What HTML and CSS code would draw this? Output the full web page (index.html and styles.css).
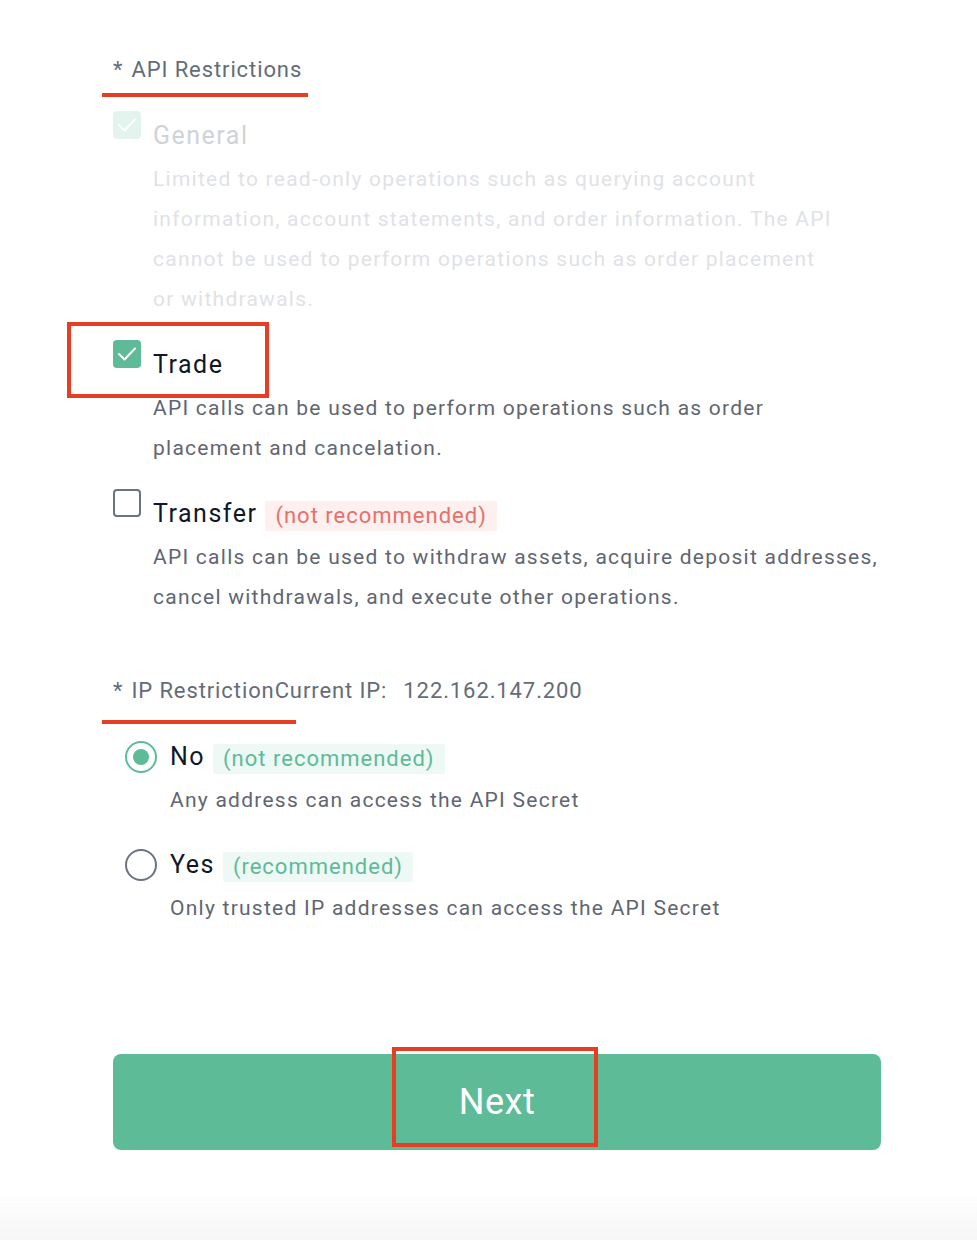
FILE: index.html
```html
<!DOCTYPE html>
<html lang="en">
<head>
<meta charset="utf-8">
<title>API Restrictions</title>
<link rel="stylesheet" href="styles.css">
</head>
<body>
<div class="page">
  <section class="group">
    <div class="group-title"><span class="star">*</span>API Restrictions</div>
    <div class="options">
      <div class="option disabled">
        <div class="option-row">
          <span class="checkbox checked"><svg viewBox="0 0 28 28" width="28" height="28"><path d="M6 14 L11.5 19.5 L22 8.5" fill="none" stroke="#fff" stroke-width="2" stroke-linecap="round" stroke-linejoin="round"/></svg></span>
          <span class="option-label">General</span>
        </div>
        <p class="option-desc narrow">Limited to read-only operations such as querying account information, account statements, and order information. The API cannot be used to perform operations such as order placement or withdrawals.</p>
      </div>
      <div class="option">
        <div class="option-row">
          <span class="checkbox checked"><svg viewBox="0 0 28 28" width="28" height="28"><path d="M6 14 L11.5 19.5 L22 8.5" fill="none" stroke="#fff" stroke-width="2" stroke-linecap="round" stroke-linejoin="round"/></svg></span>
          <span class="option-label">Trade</span>
        </div>
        <p class="option-desc narrow">API calls can be used to perform operations such as order placement and cancelation.</p>
      </div>
      <div class="option">
        <div class="option-row">
          <span class="checkbox"></span>
          <span class="option-label">Transfer</span>
          <span class="tag tag-red">(not recommended)</span>
        </div>
        <p class="option-desc">API calls can be used to withdraw assets, acquire deposit addresses, cancel withdrawals, and execute other operations.</p>
      </div>
    </div>
  </section>

  <section class="group ip-group">
    <div class="group-title"><span class="star">*</span>IP RestrictionCurrent IP:<span class="ip">122.162.147.200</span></div>
    <div class="radios">
      <div class="option radio-option">
        <div class="option-row">
          <span class="radio on"></span>
          <span class="option-label">No</span>
          <span class="tag tag-green">(not recommended)</span>
        </div>
        <p class="option-desc">Any address can access the API Secret</p>
      </div>
      <div class="option radio-option">
        <div class="option-row">
          <span class="radio"></span>
          <span class="option-label">Yes</span>
          <span class="tag tag-green">(recommended)</span>
        </div>
        <p class="option-desc">Only trusted IP addresses can access the API Secret</p>
      </div>
    </div>
  </section>

  <button class="next-btn" type="button">Next</button>

  <div class="mark mark-line mark-1"></div>
  <div class="mark mark-box mark-2"></div>
  <div class="mark mark-line mark-3"></div>
  <div class="mark mark-box mark-4"></div>
  <div class="bottom-fade"></div>
</div>
</body>
</html>
```
FILE: styles.css
```css
* { box-sizing: border-box; }
html, body { margin: 0; padding: 0; background: #fff; }
body {
  font-family: "Roboto", "Noto Sans", sans-serif;
  color: #101828;
}
.page {
  position: relative;
  width: 977px;
  height: 1240px;
  padding: 52px 96px 0 113px;
  overflow: hidden;
}
.group-title {
  font-size: 22px;
  line-height: 36px;
  color: #646c78;
  letter-spacing: 0.9px;
}
.star { margin-right: 8px; }
.ip { margin-left: 16px; }
.options {
  margin-top: 25px;
  display: flex;
  flex-direction: column;
  gap: 23px;
}
.option-row {
  display: flex;
  align-items: flex-start;
  height: 46px;
}
.option-label {
  font-size: 25px;
  line-height: 46px;
  margin-left: 12px;
  letter-spacing: 1.5px;
  color: #101828;
}
.option-desc {
  margin: 0;
  padding-left: 40px;
  font-size: 21px;
  line-height: 40px;
  color: #5f6671;
  letter-spacing: 1.25px;
}
.option-desc.narrow { max-width: 728px; }
.checkbox {
  width: 28px;
  height: 28px;
  margin-top: -2px;
  border: 2px solid #6b7380;
  border-radius: 4px;
  flex: none;
}
.checkbox.checked {
  border: none;
  background: #5dbb98;
}
.checkbox svg { display: block; }
.disabled .checkbox.checked { background: #e3f3ed; }
.disabled .option-label { color: #cfd3d8; }
.disabled .option-desc { color: #dfe2e6; }
.tag {
  margin-left: 8px;
  margin-top: 10px;
  height: 30px;
  line-height: 30px;
  padding: 0 10px;
  font-size: 22px;
  letter-spacing: 1px;
  border-radius: 2px;
}
.tag-red { background: #fdf0ee; color: #e6706a; }
.tag-green { background: #eef8f4; color: #5dbb98; }

.ip-group { margin-top: 56px; }
.radios {
  margin-top: 25px;
  padding-left: 12px;
  display: flex;
  flex-direction: column;
  gap: 22px;
}
.radio {
  width: 32px;
  height: 32px;
  margin-top: 7px;
  border: 2px solid #6b7380;
  border-radius: 50%;
  flex: none;
  position: relative;
}
.radio.on { border-color: #5dbb98; }
.radio.on::after {
  content: "";
  position: absolute;
  left: 6px;
  top: 6px;
  width: 16px;
  height: 16px;
  border-radius: 50%;
  background: #5dbb98;
}
.radio-option .option-label { margin-left: 13px; }
.radio-option .option-desc { padding-left: 45px; }

.next-btn {
  display: block;
  margin-top: 126px;
  width: 768px;
  height: 96px;
  border: none;
  border-radius: 8px;
  background: #5ebb98;
  color: #fff;
  font-family: inherit;
  font-size: 36px;
  letter-spacing: 0.5px;
  cursor: pointer;
}

.mark { position: absolute; }
.mark-line { height: 4px; background: #e63d23; }
.mark-box { border: 4px solid #e63d23; }
.mark-1 { left: 102px; top: 93px; width: 206px; }
.mark-2 { left: 67px; top: 322px; width: 202px; height: 76px; }
.mark-3 { left: 102px; top: 720px; width: 194px; height: 4px; }
.mark-4 { left: 392px; top: 1047px; width: 206px; height: 100px; }
.bottom-fade {
  position: absolute;
  left: 0;
  right: 0;
  bottom: 0;
  height: 50px;
  background: linear-gradient(to bottom, rgba(245,245,245,0), #f6f6f6);
}
```
